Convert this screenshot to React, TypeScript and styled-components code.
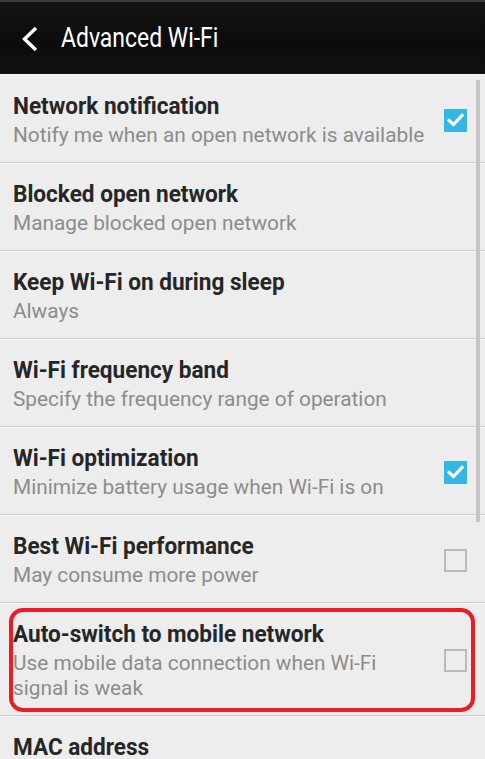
import styled, { createGlobalStyle } from 'styled-components';

const GlobalStyle = createGlobalStyle`
  html, body {
    margin: 0;
    padding: 0;
    background: #ededed;
  }
  body {
    font-family: Roboto, 'Liberation Sans', sans-serif;
    -webkit-font-smoothing: antialiased;
  }
`;

interface Setting {
  title: string;
  summary?: string;
  checkbox?: 'on' | 'off';
  highlight?: boolean;
}

const settings: Setting[] = [
  { title: 'Network notification', summary: 'Notify me when an open network is available', checkbox: 'on' },
  { title: 'Blocked open network', summary: 'Manage blocked open network' },
  { title: 'Keep Wi-Fi on during sleep', summary: 'Always' },
  { title: 'Wi-Fi frequency band', summary: 'Specify the frequency range of operation' },
  { title: 'Wi-Fi optimization', summary: 'Minimize battery usage when Wi-Fi is on', checkbox: 'on' },
  { title: 'Best Wi-Fi performance', summary: 'May consume more power', checkbox: 'off' },
  {
    title: 'Auto-switch to mobile network',
    summary: 'Use mobile data connection when Wi-Fi signal is weak',
    checkbox: 'off',
    highlight: true,
  },
  { title: 'MAC address' },
];

const Screen = styled.div`
  position: relative;
  width: 485px;
  height: 759px;
  overflow: hidden;
  background: #ededed;
`;

const ActionBar = styled.header`
  height: 75px;
  display: flex;
  align-items: center;
  gap: 22px;
  padding-left: 21px;
  box-sizing: border-box;
  border-top: 2px solid #3c3c3c;
  background: linear-gradient(180deg, #141414 0%, #0b0b0b 60%, #121212 100%);
  border-bottom: 1px solid #f6f6f6;
`;

const BackIcon = styled.svg`
  width: 18px;
  height: 26px;
  margin-top: 2px;
`;

const Title = styled.h1`
  margin: 0;
  font-size: 27px;
  font-weight: 400;
  color: #ffffff;
  display: inline-block;
  transform: scaleX(0.85);
  transform-origin: left center;
  white-space: nowrap;
`;

const List = styled.div`
  display: flex;
  flex-direction: column;
`;

const Row = styled.div`
  position: relative;
  display: flex;
  align-items: center;
  padding: 17px 18px 14px 13px;
  border-bottom: 1px solid #c9c9c9;
  box-shadow: 0 1px 0 #fafafa;
`;

const Texts = styled.div`
  flex: 1;
  min-width: 0;
  padding-right: 14px;
`;

const ItemTitle = styled.div`
  font-size: 24px;
  line-height: 29px;
  margin-bottom: 2px;
  font-weight: 700;
  color: #262626;
  white-space: nowrap;
  transform: scaleX(0.94);
  transform-origin: left center;
`;

const Summary = styled.div`
  font-size: 20.8px;
  line-height: 25px;
  color: #8c8c8c;
`;

const Box = styled.div<{ $checked: boolean }>`
  width: 23px;
  height: 23px;
  flex: none;
  box-sizing: border-box;
  display: flex;
  align-items: center;
  justify-content: center;
  background: ${(p) => (p.$checked ? '#33b5e5' : 'transparent')};
  border: ${(p) => (p.$checked ? 'none' : '2px solid #bababa')};
`;

const Highlight = styled.div`
  position: absolute;
  left: 9px;
  right: 10px;
  top: 5px;
  bottom: 3px;
  border: 4px solid #ed1c24;
  border-radius: 14px;
  pointer-events: none;
`;

const ScrollThumb = styled.div`
  position: absolute;
  left: 476px;
  top: 80px;
  width: 4px;
  height: 442px;
  background: #c6c6c6;
`;

function CheckBox({ checked }: { checked: boolean }) {
  return (
    <Box $checked={checked}>
      {checked && (
        <svg width="17" height="14" viewBox="0 0 17 14">
          <path d="M2 7.5 L6.5 11.5 L15 2.5" fill="none" stroke="#fff" strokeWidth="3.2" strokeLinecap="square" />
        </svg>
      )}
    </Box>
  );
}

export default function App() {
  return (
    <>
      <GlobalStyle />
      <Screen>
        <ActionBar>
          <BackIcon viewBox="0 0 18 26">
            <path d="M15 2 L3.5 13 L15 24" fill="none" stroke="#fff" strokeWidth="3.4" />
          </BackIcon>
          <Title>Advanced Wi-Fi</Title>
        </ActionBar>
        <List>
          {settings.map((s) => (
            <Row key={s.title}>
              <Texts>
                <ItemTitle>{s.title}</ItemTitle>
                {s.summary && <Summary>{s.summary}</Summary>}
              </Texts>
              {s.checkbox && <CheckBox checked={s.checkbox === 'on'} />}
              {s.highlight && <Highlight />}
            </Row>
          ))}
        </List>
        <ScrollThumb />
      </Screen>
    </>
  );
}
